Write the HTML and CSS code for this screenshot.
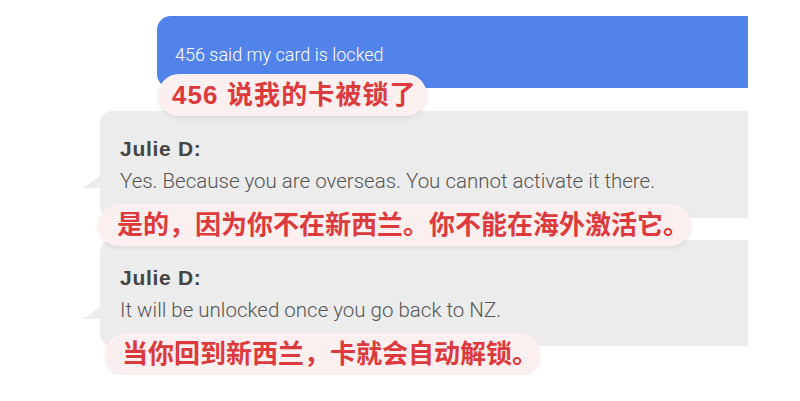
FILE: index.html
```html
<!DOCTYPE html>
<html lang="zh">
<head>
<meta charset="utf-8">
<link rel="stylesheet" href="styles.css">
<title>Chat</title>
</head>
<body>
<div class="chat">
  <div class="bubble out">
    <p class="text">456 said my card is locked</p>
  </div>
  <div class="cap cap1">456 说我的卡被锁了</div>

  <div class="bubble in in1">
    <p class="name">Julie D:</p>
    <p class="text">Yes. Because you are overseas. You cannot activate it there.</p>
  </div>
  <div class="cap cap2">是的，因为你不在新西兰。你不能在海外激活它。</div>

  <div class="bubble in in2">
    <p class="name">Julie D:</p>
    <p class="text">It will be unlocked once you go back to NZ.</p>
  </div>
  <div class="cap cap3">当你回到新西兰，卡就会自动解锁。</div>
</div>
</body>
</html>
```
FILE: styles.css
```css
html, body {
  margin: 0;
  padding: 0;
  background: #ffffff;
}
.chat {
  width: 748px;
  padding-top: 16px;
  display: flex;
  flex-direction: column;
  align-items: flex-start;
}
.bubble {
  position: relative;
  box-sizing: border-box;
  font-family: Roboto, "Liberation Sans", sans-serif;
}
.bubble p {
  margin: 0;
}
.out {
  margin-left: 157px;
  width: 591px;
  height: 72px;
  background: #5183ea;
  border-radius: 14px 0 0 14px;
  padding: 29px 0 0 18px;
}
.out .text {
  color: #ffffff;
  font-size: 18px;
  font-weight: 300;
  line-height: 20px;
}
.in {
  margin-left: 100px;
  width: 648px;
  background: #ececec;
  border-radius: 12px 0 0 12px;
  padding: 26px 0 0 20px;
}
.in::before {
  content: "";
  position: absolute;
  left: -17px;
  width: 0;
  height: 0;
  border-style: solid;
  border-width: 0 0 13px 18px;
  border-color: transparent transparent #ececec transparent;
}
.in1 {
  margin-top: -5px;
  height: 107px;
}
.in1::before { top: 64px; }
.in2 {
  margin-top: -6px;
  height: 106px;
}
.in2::before { top: 66px; }
.name {
  color: #444444;
  font-family: "Liberation Sans", Arial, sans-serif;
  font-size: 21px;
  font-weight: 700;
  letter-spacing: 0.7px;
  line-height: 24px;
}
.in .text {
  margin-top: 9px;
  color: #555555;
  font-size: 20.5px;
  font-weight: 300;
  line-height: 22px;
}
.cap {
  position: relative;
  z-index: 1;
  box-sizing: border-box;
  height: 42px;
  border-radius: 21px;
  background: #fcefef;
  box-shadow: 0 2px 4px rgba(0, 0, 0, 0.08);
  color: #dc3a3c;
  font-family: "Liberation Sans", "Noto Sans CJK SC", sans-serif;
  font-weight: 700;
  font-size: 26px;
  line-height: 42px;
  white-space: nowrap;
}
.cap1 {
  margin-left: 158px;
  margin-top: -14px;
  padding: 0 10px 0 14px;
  letter-spacing: 1.1px;
}
.cap2 {
  margin-left: 98px;
  margin-top: -14px;
  padding: 0 2px 0 19px;
}
.cap3 {
  margin-left: 105px;
  margin-top: -13px;
  padding: 0 2px 0 17px;
}
```
